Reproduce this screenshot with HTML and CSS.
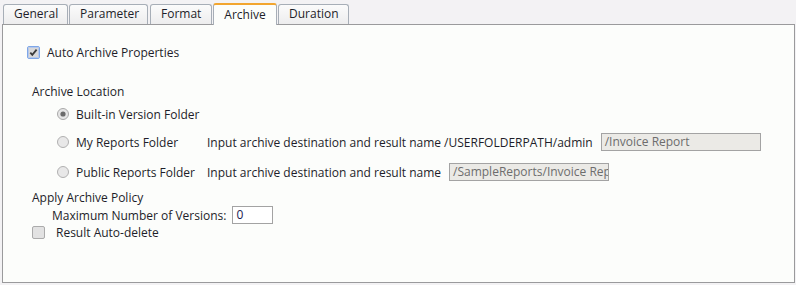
FILE: index.html
```html
<!DOCTYPE html>
<html>
<head>
<meta charset="utf-8">
<link rel="stylesheet" href="styles.css">
</head>
<body>
<div class="tabs">
  <div class="tab">General</div>
  <div class="tab">Parameter</div>
  <div class="tab">Format</div>
  <div class="tab active">Archive</div>
  <div class="tab">Duration</div>
</div>
<div class="panel">
  <div class="row-auto">
    <span class="cb focus">
      <svg width="13" height="13" viewBox="0 0 13 13"><rect x="0.5" y="0.5" width="12" height="12" rx="1.5" fill="#d9d9d9" stroke="#7ea7e8"/><rect x="1.5" y="1.5" width="10" height="10" rx="1" fill="none" stroke="#b6c8ea"/><path d="M3.3 6.6 L5.3 8.8 L9.6 3.6" fill="none" stroke="#3b3b3b" stroke-width="1.8"/></svg>
    </span>
    <span class="lbl">Auto Archive Properties</span>
  </div>

  <div class="section-title loc-title">Archive Location</div>

  <div class="radio-row r1">
    <span class="rb"><svg width="12" height="12" viewBox="0 0 12 12"><circle cx="6" cy="6" r="5.5" fill="#e6e6e6" stroke="#a9a9a9"/><circle cx="6" cy="6" r="2.6" fill="#6b6b6b"/></svg></span>
    <span class="rlabel">Built-in Version Folder</span>
  </div>
  <div class="radio-row r2">
    <span class="rb"><svg width="12" height="12" viewBox="0 0 12 12"><circle cx="6" cy="6" r="5.5" fill="#e8e8e8" stroke="#b0b0b0"/></svg></span>
    <span class="rlabel">My Reports Folder</span>
    <span class="hint">Input archive destination and result name /USERFOLDERPATH/admin</span>
    <span class="field disabled">/Invoice Report</span>
  </div>
  <div class="radio-row r3">
    <span class="rb"><svg width="12" height="12" viewBox="0 0 12 12"><circle cx="6" cy="6" r="5.5" fill="#e8e8e8" stroke="#b0b0b0"/></svg></span>
    <span class="rlabel">Public Reports Folder</span>
    <span class="hint">Input archive destination and result name</span>
    <span class="field disabled">/SampleReports/Invoice Report</span>
  </div>

  <div class="section-title policy-title">Apply Archive Policy</div>
  <div class="max-row">
    <span class="lbl">Maximum Number of Versions:</span>
    <span class="field num">0</span>
  </div>
  <div class="del-row">
    <span class="cb">
      <svg width="13" height="13" viewBox="0 0 13 13"><rect x="0.5" y="0.5" width="12" height="12" rx="1.5" fill="#e2e2e2" stroke="#ababab"/></svg>
    </span>
    <span class="lbl">Result Auto-delete</span>
  </div>
</div>
</body>
</html>
```

FILE: styles.css
```css
html, body {
  margin: 0;
  padding: 0;
}
body {
  background: #f3f2f4;
  font-family: "Open Sans", "Noto Sans", sans-serif;
  font-size: 12px;
  color: #1e1e2a;
  width: 796px;
  height: 285px;
  overflow: hidden;
}
.tabs {
  display: flex;
  align-items: flex-end;
  height: 21px;
  padding: 3px 0 0 3px;
}
.tab {
  height: 19px;
  line-height: 18px;
  padding: 0 10px;
  border: 1px solid #a7aeb7;
  border-bottom: none;
  border-radius: 3px 3px 0 0;
  background: linear-gradient(#fbfbfb, #ededee);
  margin-right: 1px;
  box-sizing: content-box;
  text-align: center;
}
.tab:nth-child(1) { width: 43px; }
.tab:nth-child(2) { width: 57px; margin-right: 2px; }
.tab:nth-child(3) { width: 40px; }
.tab:nth-child(4) { width: 42px; }
.tab:nth-child(5) { width: 49px; }
.tab.active {
  height: 20px;
  line-height: 19px;
  border-top: 2px solid #f2a52f;
  background: #fcfdfb;
  position: relative;
  z-index: 2;
  margin-bottom: -1px;
}
.panel {
  margin-left: 2px;
  width: 791px;
  height: 257px;
  border: 1px solid #9a9a9c;
  background: #fcfdfb;
  position: relative;
  z-index: 1;
}
.cb, .rb {
  display: inline-flex;
  flex: none;
}
.row-auto {
  display: flex;
  align-items: center;
  height: 16px;
  margin: 19px 0 0 24px;
  gap: 7px;
}
.section-title {
  height: 16px;
  line-height: 16px;
  margin-left: 29px;
}
.loc-title { margin-top: 24px; }
.radio-row {
  display: flex;
  align-items: center;
  height: 18px;
  margin-left: 54px;
}
.r1 { margin-top: 5px; }
.r2 { margin-top: 10px; }
.r3 { margin-top: 12px; }
.rb { margin-right: 7px; }
.rlabel {
  width: 131px;
}
.hint {
  margin-right: 8px;
}
.field {
  box-sizing: border-box;
  height: 18px;
  line-height: 16px;
  border: 1px solid #a3a3a3;
  padding: 0 3px;
  white-space: nowrap;
  overflow: hidden;
}
.field.disabled {
  width: 160px;
  background: #ebeae6;
  color: #6d6d6d;
}
.policy-title { margin-top: 9px; }
.max-row {
  display: flex;
  align-items: center;
  height: 18px;
  margin-left: 49px;
  gap: 6px;
}
.field.num {
  width: 41px;
  background: #ffffff;
  color: #1a1a50;
}
.del-row {
  display: flex;
  align-items: center;
  height: 16px;
  margin-left: 29px;
  gap: 11px;
}
```
